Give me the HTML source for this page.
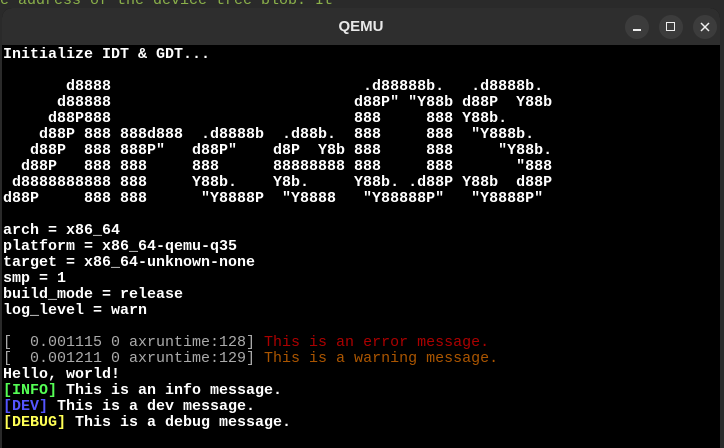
<!DOCTYPE html>
<html><head><style>
body{margin:0;width:724px;height:446px;background:#2a2a2a;position:relative;overflow:hidden;font-family:"Liberation Mono",monospace}
.bg{position:absolute;left:0;top:-7px;color:#8ab04a;font-size:15px;white-space:pre;line-height:16px}
.win{position:absolute;left:2px;top:8px;width:718px;height:440px;background:#000;border-radius:10px 10px 0 0;overflow:hidden}
.tb{position:absolute;left:0;top:0;width:718px;height:37px;background:#2e2e2e}
.title{position:absolute;left:0;width:718px;top:10px;text-align:center;color:#e8e8e8;font:bold 15px "Liberation Sans",sans-serif}
.btn{position:absolute;top:7px;width:24px;height:24px;border-radius:50%;background:#3c3c3c}
.term{position:absolute;left:1px;top:39px;font-size:15px;line-height:16px;white-space:pre;color:#fff;font-weight:bold}
.g{color:#aaa;font-weight:normal}.r{color:#aa0000;font-weight:normal}.o{color:#aa5500;font-weight:normal}
</style></head><body>
<div class="bg">e address of the device tree blob. It</div>
<div class="win">
<div class="tb"><div class="title">QEMU</div>
<div class="btn" style="left:623px"><div style="position:absolute;left:8px;top:14px;width:8px;height:1.5px;background:#eee"></div></div>
<div class="btn" style="left:657px"><div style="position:absolute;left:7px;top:7px;border:1.5px solid #eee;box-sizing:content-box;width:7px;height:7px"></div></div>
<div class="btn" style="left:691px"><svg width="24" height="24" style="position:absolute;left:0;top:0"><path d="M8 8L16 16M16 8L8 16" stroke="#eee" stroke-width="1.5"/></svg></div>
</div>
<div class="term">Initialize IDT &amp; GDT...

       d8888                            .d88888b.   .d8888b.
      d88888                           d88P" "Y88b d88P  Y88b
     d88P888                           888     888 Y88b.
    d88P 888 888d888  .d8888b  .d88b.  888     888  "Y888b.
   d88P  888 888P"   d88P"    d8P  Y8b 888     888     "Y88b.
  d88P   888 888     888      88888888 888     888       "888
 d8888888888 888     Y88b.    Y8b.     Y88b. .d88P Y88b  d88P
d88P     888 888      "Y8888P  "Y8888   "Y88888P"   "Y8888P"

arch = x86_64
platform = x86_64-qemu-q35
target = x86_64-unknown-none
smp = 1
build_mode = release
log_level = warn

<span class="g">[  0.001115 0 axruntime:128] </span><span class="r">This is an error message.</span>
<span class="g">[  0.001211 0 axruntime:129] </span><span class="o">This is a warning message.</span>
Hello, world!
<span style="color:#55ff55">[INFO]</span> This is an info message.
<span style="color:#5555ff">[DEV]</span> This is a dev message.
<span style="color:#ffff55">[DEBUG]</span> This is a debug message.</div>
</div>
</body></html>
